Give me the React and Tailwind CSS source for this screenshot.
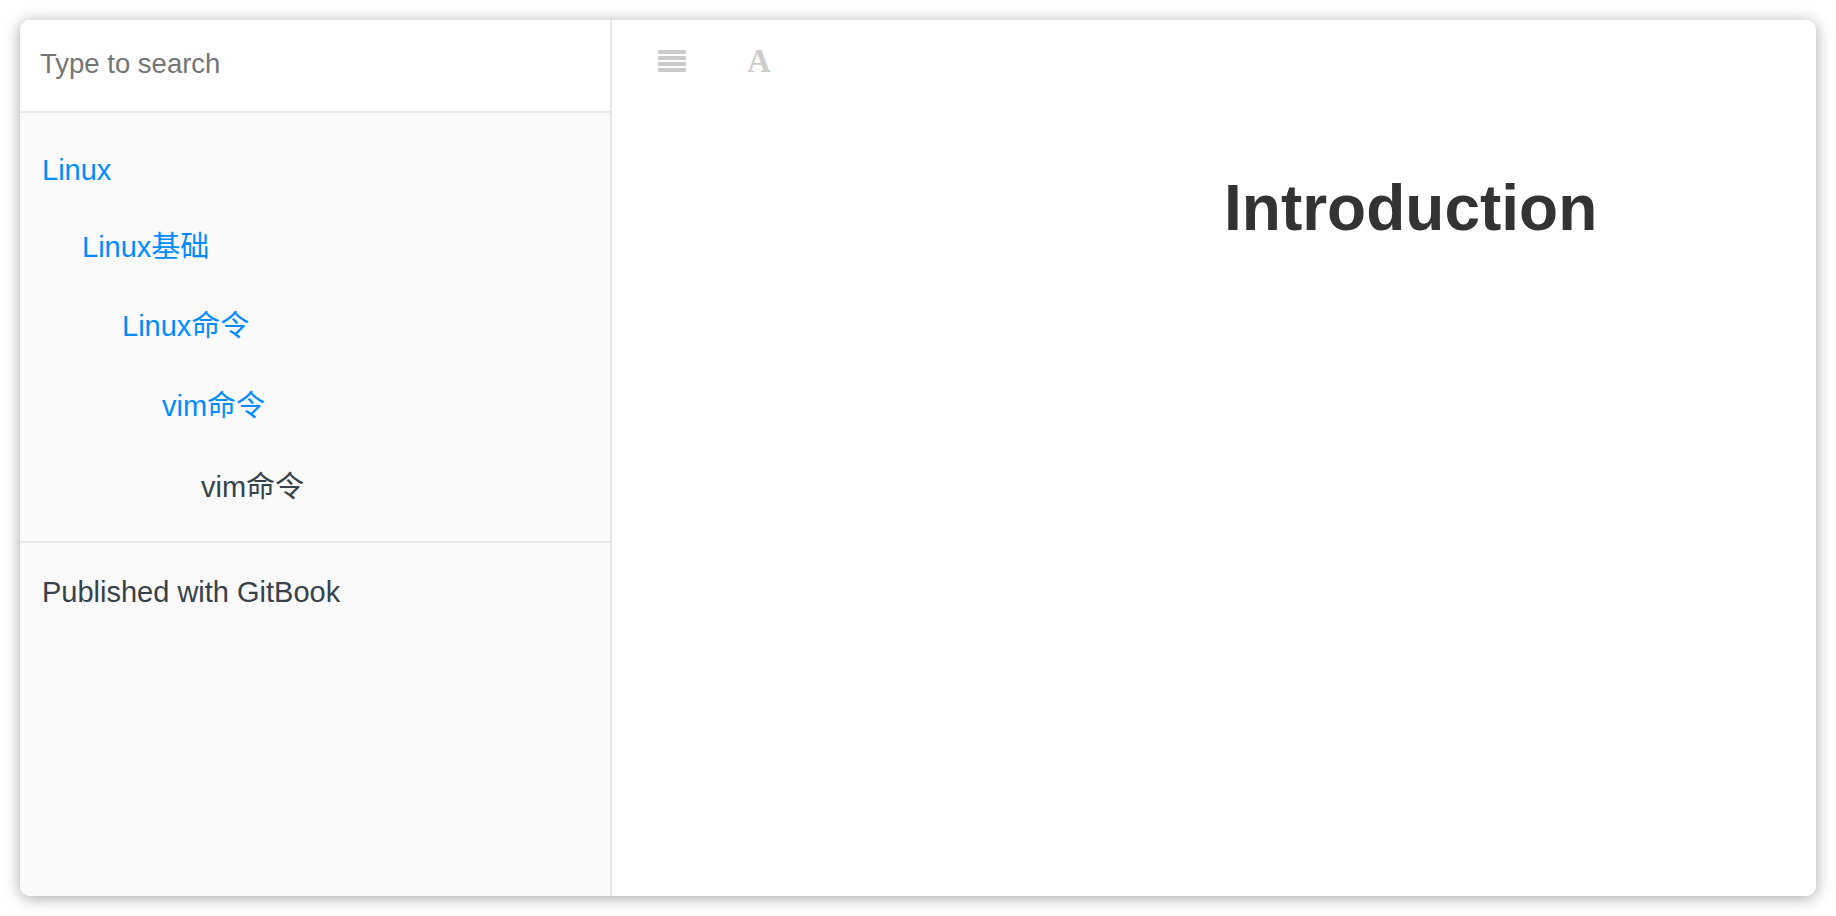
const SANS = { fontFamily: '"Liberation Sans", "Noto Sans CJK SC", Arial, sans-serif' };

const toc = [
  { label: "Linux", depth: 0, link: true, h: "h-[77px]" },
  { label: "Linux基础", depth: 1, link: true, h: "h-[78px]" },
  { label: "Linux命令", depth: 2, link: true, h: "h-[80px]" },
  { label: "vim命令", depth: 3, link: true, h: "h-[80px]" },
  { label: "vim命令", depth: 4, link: false, h: "h-[81px]" },
];

const indent = ["pl-[22px]", "pl-[62px]", "pl-[102px]", "pl-[142px]", "pl-[181px]"];

function MenuIcon() {
  return (
    <svg width="28" height="22" viewBox="0 0 28 22" fill="#cccccc">
      <rect x="0" y="0" width="28" height="4" />
      <rect x="0" y="6" width="28" height="4" />
      <rect x="0" y="12" width="28" height="4" />
      <rect x="0" y="18" width="28" height="4" />
    </svg>
  );
}

export default function App() {
  return (
    <div className="w-[1836px] h-[916px] bg-white p-5" style={SANS}>
      <div className="flex h-full rounded-[10px] overflow-hidden bg-white shadow-[0_2px_16px_rgba(0,0,0,0.35)]">

        {/* Sidebar */}
        <aside className="w-[592px] shrink-0 flex flex-col bg-[#fafafa] border-r-2 border-[#e6e6e6]">
          <div className="h-[93px] shrink-0 flex items-center pl-5 pb-[4px] bg-white border-b-2 border-[#e8e8e8]">
            <span className="text-[27.5px] text-[#757575]">Type to search</span>
          </div>

          <ul className="pt-[19px] pb-[13px] border-b-2 border-[#e8e8e8]">
            {toc.map((t, i) => (
              <li key={i} className={`${t.h} flex items-center text-[29px] ${indent[t.depth]} ${t.link ? "text-[#008cff]" : "text-[#364149]"}`}>
                {t.label}
              </li>
            ))}
          </ul>

          <div className="pl-[22px] pt-[29px] leading-[40px] text-[29px] text-[#364149]">
            Published with GitBook
          </div>
        </aside>

        {/* Body */}
        <main className="flex-1 flex flex-col bg-white">
          <div className="h-[82px] shrink-0 flex items-center pl-[46px] gap-[61px]">
            <MenuIcon />
            <span className="text-[33px] leading-none font-bold text-[#cccccc]" style={{ fontFamily: '"Liberation Serif", serif' }}>A</span>
          </div>
          <div className="pl-[612px] pt-[74px]">
            <h1 className="text-[64px] leading-[64px] font-bold text-[#333333]">Introduction</h1>
          </div>
        </main>
      </div>
    </div>
  );
}
